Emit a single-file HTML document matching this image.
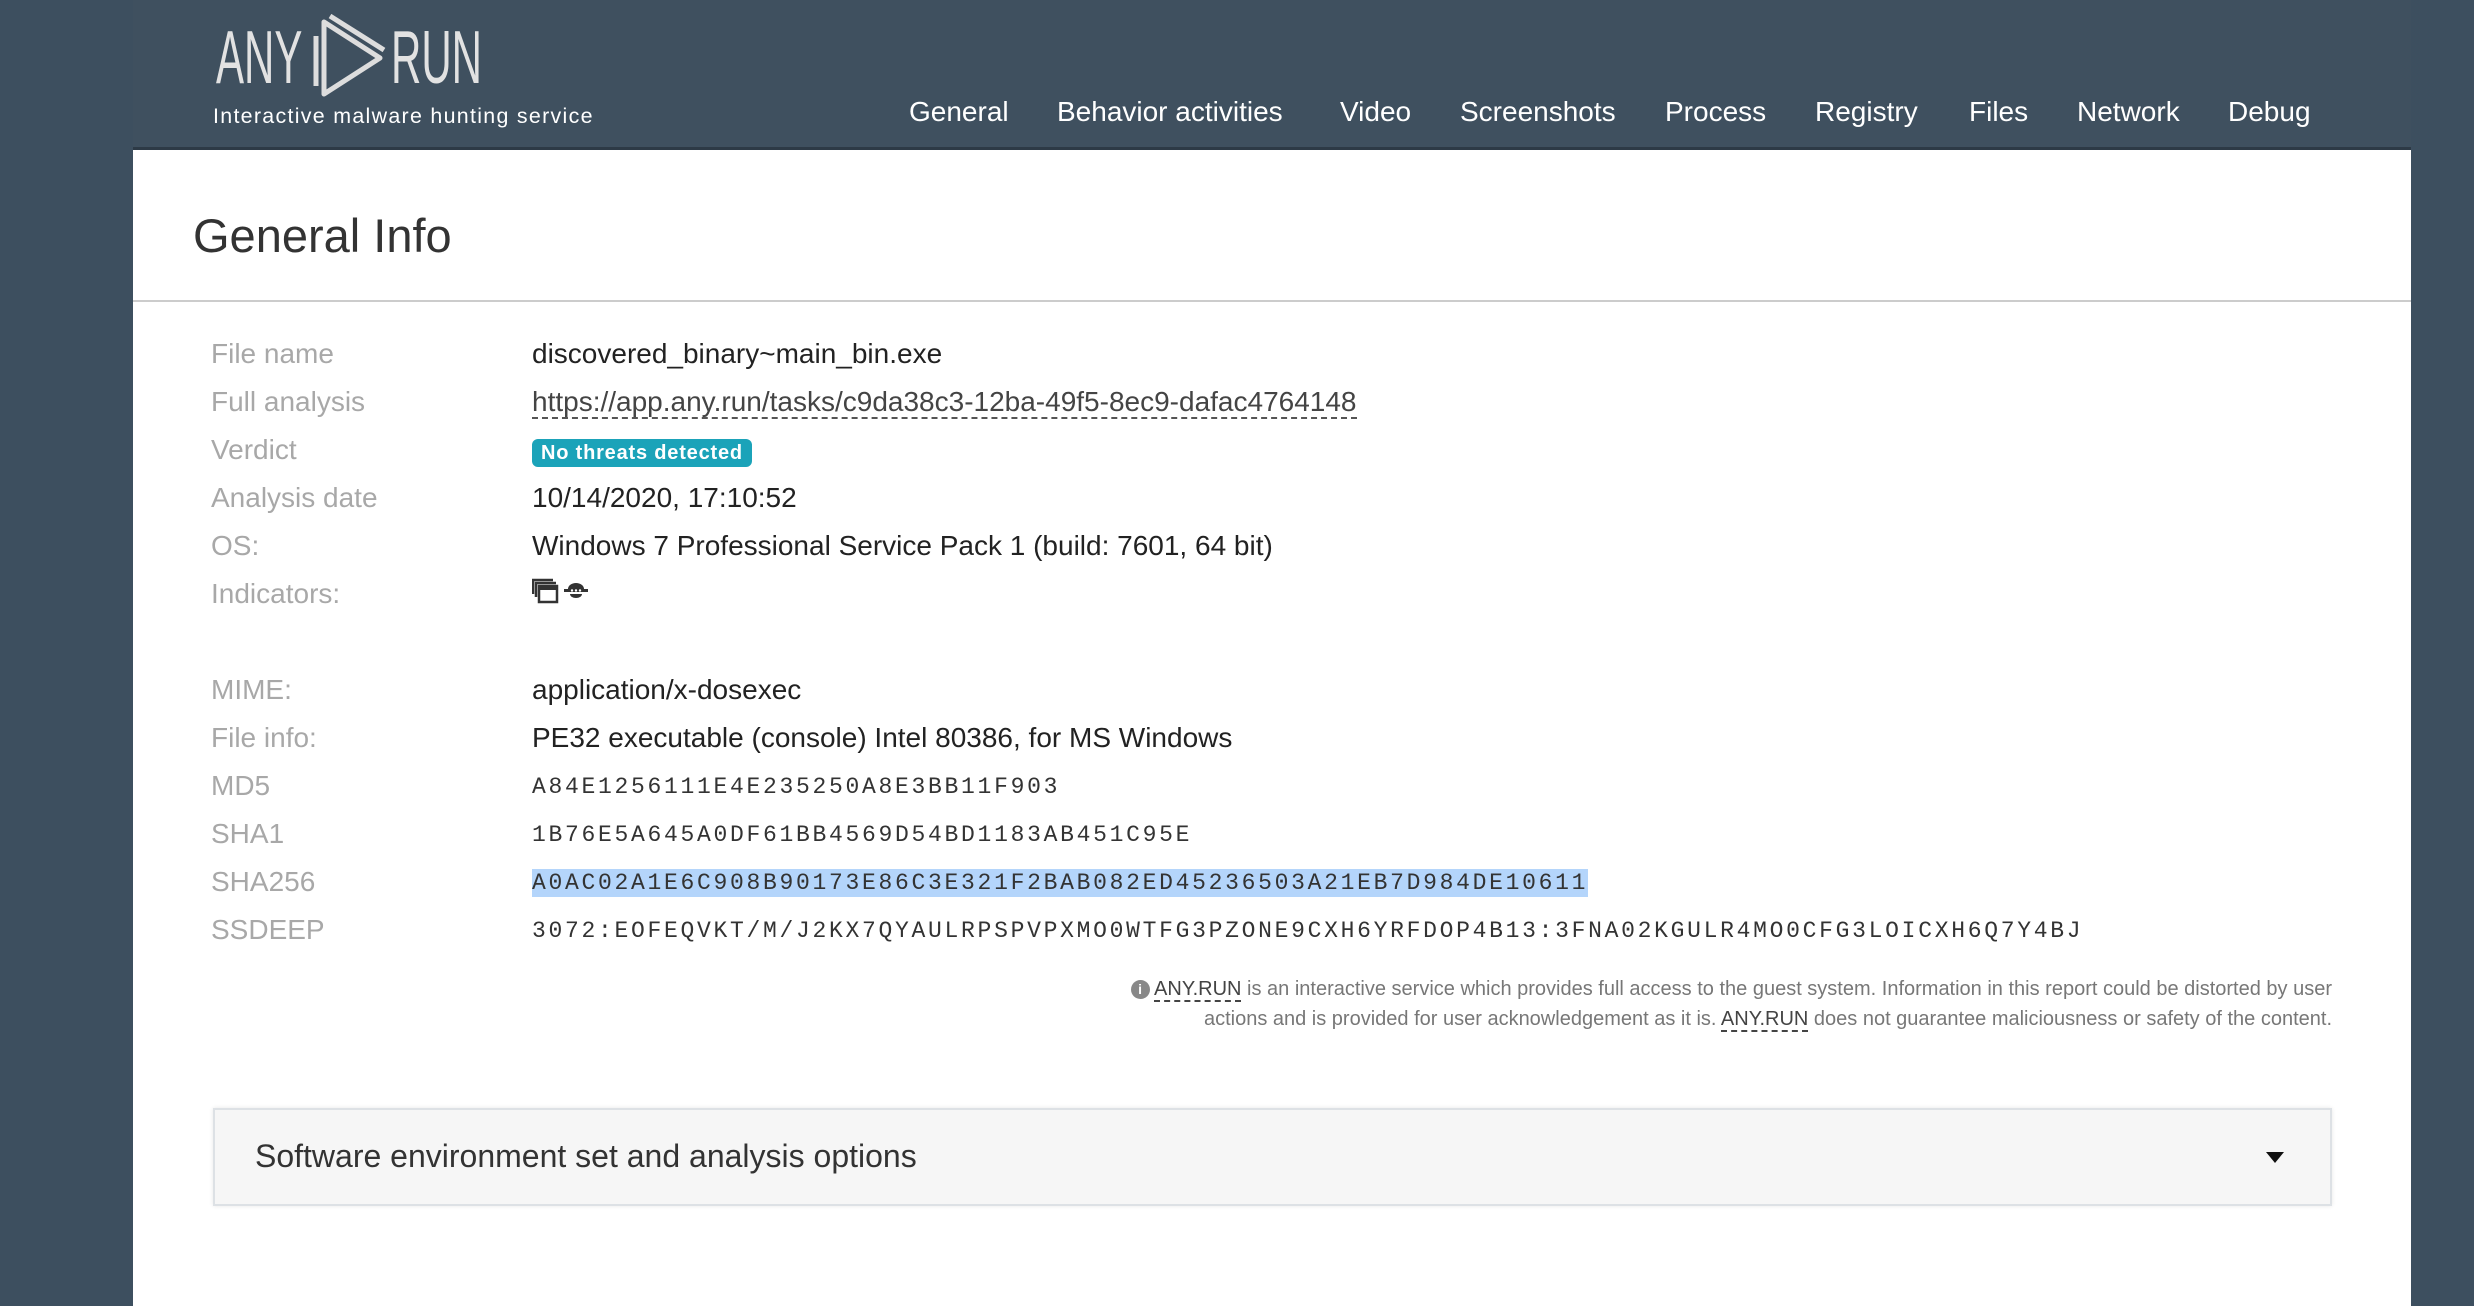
<!DOCTYPE html>
<html><head><meta charset="utf-8"><style>
*{margin:0;padding:0;box-sizing:border-box}
body{width:2474px;height:1306px;background:#3d4f5f;font-family:"Liberation Sans",sans-serif;overflow:hidden;position:relative}
#wrap{position:absolute;left:133px;top:0;width:2278px;height:1306px;background:#fff}
#hdr{position:absolute;left:0;top:0;width:100%;height:150px;background:#3f505f;border-bottom:3px solid #2d3a46}
.nav{position:absolute;top:96px;font-size:28px;color:#fff;white-space:nowrap}
.logo{position:absolute;top:14px;font-size:75px;color:#e2e2e2;transform:scaleX(0.56);transform-origin:left top;white-space:nowrap}
.sub{position:absolute;left:80px;top:104px;font-size:21.4px;color:#fff;letter-spacing:1.3px}
h1{position:absolute;left:60px;top:208px;font-size:47px;font-weight:normal;color:#333}
.hr{position:absolute;left:0;top:300px;width:100%;height:2px;background:#ccc}
.lb{position:absolute;left:78px;font-size:28px;color:#a8a8a8}
.v{position:absolute;left:399px;font-size:28px;color:#222;white-space:nowrap}
.m{font-family:"Liberation Mono",monospace;font-size:23px;letter-spacing:2.7px;color:#333}
.note{position:absolute;right:79px;text-align:right;font-size:20px;color:#777;white-space:nowrap}
.u{border-bottom:2px dashed #444;color:#444}
</style></head><body>
<div id="wrap">
<div id="hdr">
 <div class="logo" style="left:83px">ANY</div>
 <div class="logo" style="left:258px">RUN</div>
 <svg style="position:absolute;left:179px;top:14px" width="76" height="86" viewBox="0 0 76 86"><g fill="none" stroke="#ddd" stroke-width="5" stroke-linejoin="round"><path d="M12 8 L68 44 L12 80 Z"/><path d="M4 22 L4 72 M18 2 L72 36"/></g></svg>
 <div class="sub">Interactive malware hunting service</div>
 <div class="nav" style="left:776px">General</div>
 <div class="nav" style="left:924px">Behavior activities</div>
 <div class="nav" style="left:1207px">Video</div>
 <div class="nav" style="left:1327px">Screenshots</div>
 <div class="nav" style="left:1532px">Process</div>
 <div class="nav" style="left:1682px">Registry</div>
 <div class="nav" style="left:1836px">Files</div>
 <div class="nav" style="left:1944px">Network</div>
 <div class="nav" style="left:2095px">Debug</div>
</div>
<h1>General Info</h1>
<div class="hr"></div>

<div class="lb" style="top:338px">File name</div><div class="v" style="top:338px">discovered_binary~main_bin.exe</div>
<div class="lb" style="top:386px">Full analysis</div><div class="v" style="top:386px;color:#333"><span class="u" style="border-bottom-color:#555">https://app.any.run/tasks/c9da38c3-12ba-49f5-8ec9-dafac4764148</span></div>
<div class="lb" style="top:434px">Verdict</div><div class="v" style="top:439px;background:#1ba3b9;color:#fff;font-weight:bold;font-size:20px;padding:3px 9px 4px;border-radius:6px;height:28px;letter-spacing:0.8px">No threats detected</div>
<div class="lb" style="top:482px">Analysis date</div><div class="v" style="top:482px">10/14/2020, 17:10:52</div>
<div class="lb" style="top:530px">OS:</div><div class="v" style="top:530px">Windows 7 Professional Service Pack 1 (build: 7601, 64 bit)</div>
<div class="lb" style="top:578px">Indicators:</div>
<svg style="position:absolute;left:399px;top:578px" width="60" height="26" viewBox="0 0 60 26"><g fill="none" stroke="#333" stroke-width="2.5"><path d="M1 16V2h20M4 19V5h20"/><rect x="7" y="8" width="18" height="16"/></g><rect x="7" y="8" width="18" height="4" fill="#333"/><path d="M36 11a8 6 0 0 1 16 0h4v3H32v-3z" fill="#333"/><path d="M38 16h12a6 4 0 0 1-12 0z" fill="#333"/><circle cx="40" cy="12.5" r="1.2" fill="#fff"/><circle cx="44" cy="12.5" r="1.2" fill="#fff"/><circle cx="48" cy="12.5" r="1.2" fill="#fff"/></svg>

<div class="lb" style="top:674px">MIME:</div><div class="v" style="top:674px">application/x-dosexec</div>
<div class="lb" style="top:722px">File info:</div><div class="v" style="top:722px">PE32 executable (console) Intel 80386, for MS Windows</div>
<div class="lb" style="top:770px">MD5</div><div class="v m" style="top:774px">A84E1256111E4E235250A8E3BB11F903</div>
<div class="lb" style="top:818px">SHA1</div><div class="v m" style="top:822px">1B76E5A645A0DF61BB4569D54BD1183AB451C95E</div>
<div class="lb" style="top:866px">SHA256</div><div class="v m" style="top:869px;background:#b4d5fb;padding:1px 0">A0AC02A1E6C908B90173E86C3E321F2BAB082ED45236503A21EB7D984DE10611</div>
<div class="lb" style="top:914px">SSDEEP</div><div class="v m" style="top:918px">3072:EOFEQVKT/M/J2KX7QYAULRPSPVPXMO0WTFG3PZONE9CXH6YRFDOP4B13:3FNA02KGULR4MO0CFG3LOICXH6Q7Y4BJ</div>

<div class="note" style="top:978px"><span style="display:inline-block;width:19px;height:19px;border-radius:50%;background:#888;color:#fff;font-size:14px;font-weight:bold;text-align:center;line-height:19px;vertical-align:1px">i</span> <span class="u">ANY.RUN</span> is an interactive service which provides full access to the guest system. Information in this report could be distorted by user</div>
<div class="note" style="top:1008px">actions and is provided for user acknowledgement as it is. <span class="u">ANY.RUN</span> does not guarantee maliciousness or safety of the content.</div>

<div style="position:absolute;left:80px;top:1108px;width:2119px;height:98px;background:#f6f6f6;border:2px solid #dde1e5;box-shadow:0 0 4px #e6e6e6">
 <div style="position:absolute;left:40px;top:28px;font-size:32px;color:#333">Software environment set and analysis options</div>
 <div style="position:absolute;right:46px;top:42px;width:0;height:0;border-left:9px solid transparent;border-right:9px solid transparent;border-top:11px solid #111"></div>
</div>
</div>
</body></html>
